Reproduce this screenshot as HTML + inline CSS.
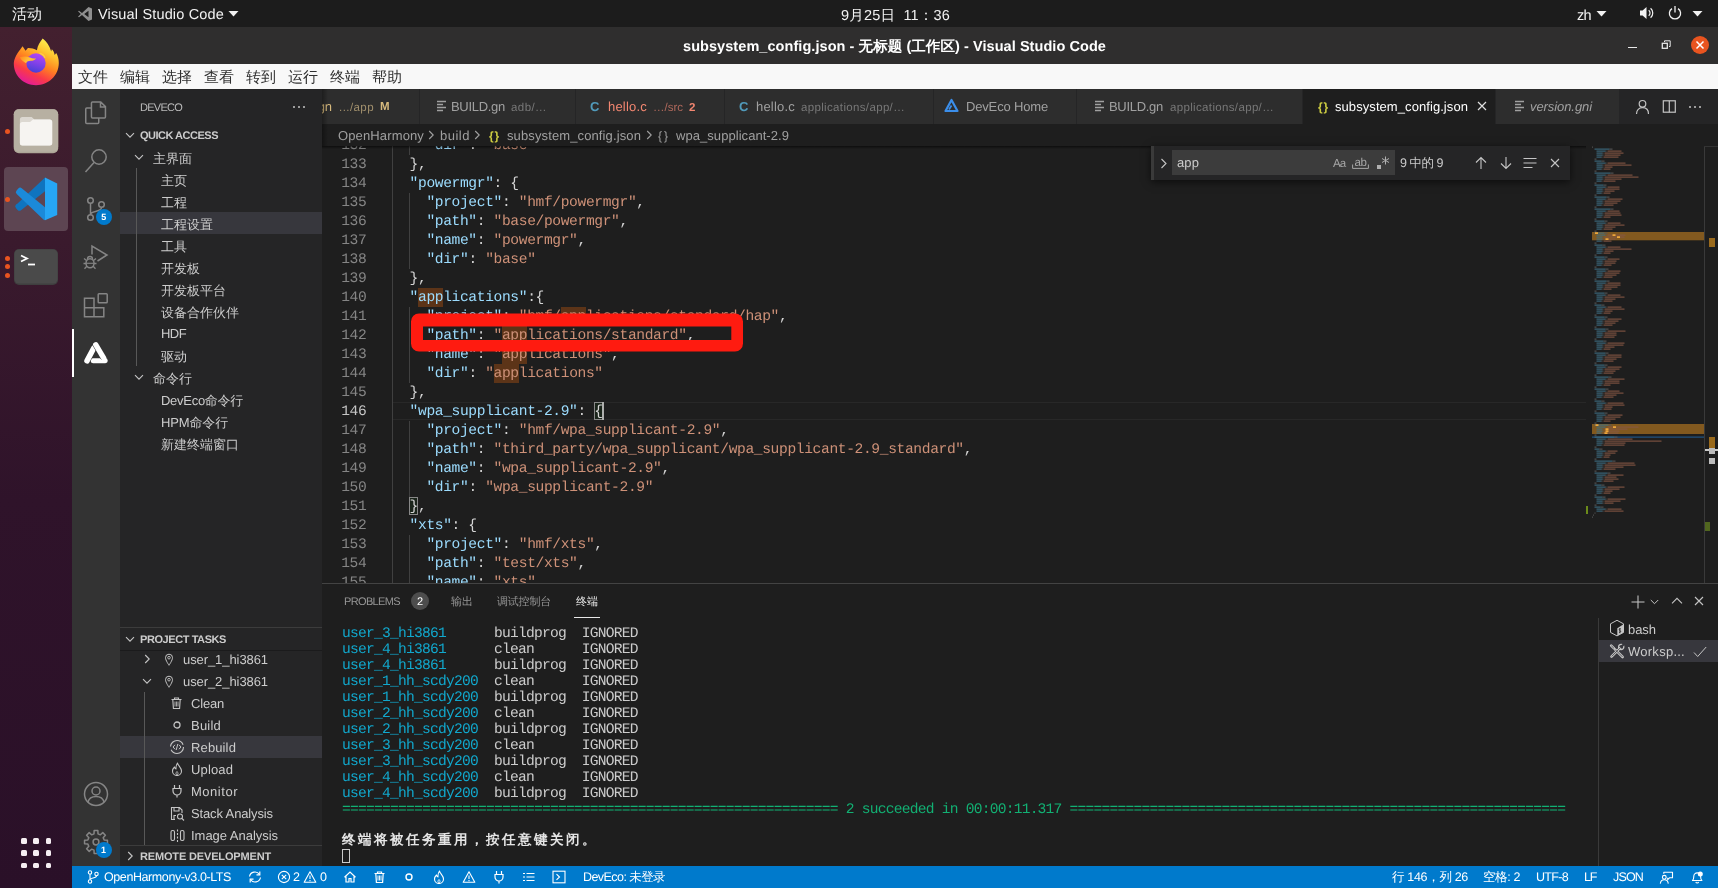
<!DOCTYPE html>
<html lang="zh"><head><meta charset="utf-8"><title>subsystem_config.json - Visual Studio Code</title>
<style>
html,body{margin:0;padding:0;}
body{width:1718px;height:888px;overflow:hidden;background:#1e1e1e;font-family:"Liberation Sans",sans-serif;position:relative;}
#root{position:absolute;left:0;top:0;width:1718px;height:888px;overflow:hidden;will-change:transform;}
#root div,#root span.t,#root svg{position:absolute;}
span.t{white-space:pre;display:block;text-rendering:geometricPrecision;}
span.m{font-family:"Liberation Mono",monospace;}
.code span{white-space:pre;}
</style></head>
<body><div id="root">
<div style="left:0px;top:0px;width:1718px;height:27px;background:#1c1c1c;"></div>
<div style="left:0px;top:27px;width:72px;height:861px;background:linear-gradient(180deg,#43202f 0%,#3a1a2d 25%,#2f132a 55%,#2a1028 100%);"></div>
<div style="left:72px;top:27px;width:1646px;height:37px;background:#2f2e2e;"></div>
<div style="left:72px;top:64px;width:1646px;height:25px;background:#f8f8f8;"></div>
<div style="left:72px;top:866px;width:1646px;height:22px;background:#007acc;"></div>
<span class="t" style="left:12px;top:5.4px;height:20px;line-height:20px;font-size:15px;color:#f2f2f2;letter-spacing:0.000px;">活动</span>
<svg style="left:77px;top:6px;" width="16" height="16" viewBox="0 0 16 16"><path d="M11.5 1 5 7 2 4.7 1 5.3 3.8 8 1 10.7l1 .6L5 9l6.5 6 3.5-1.6V2.6z M11.5 4.8v6.4L7.2 8z" fill="#8f8f8f" fill-rule="evenodd"/></svg>
<span class="t" style="left:98px;top:5.3px;height:20px;line-height:20px;font-size:14.5px;color:#f2f2f2;letter-spacing:0.162px;">Visual Studio Code</span>
<svg style="left:228px;top:10px;" width="11" height="8" viewBox="0 0 11 8"><path d="M0.5 1h10L5.5 6.5z" fill="#f2f2f2"/></svg>
<span class="t" style="left:841px;top:5.6px;height:20px;line-height:20px;font-size:14.5px;color:#f2f2f2;letter-spacing:0.172px;">9月25日  11：36</span>
<span class="t" style="left:1577px;top:5.6px;height:20px;line-height:20px;font-size:14.5px;color:#f2f2f2;letter-spacing:-0.664px;">zh</span>
<svg style="left:1596px;top:10px;" width="11" height="8" viewBox="0 0 11 8"><path d="M0.5 1h10L5.5 6.5z" fill="#f2f2f2"/></svg>
<svg style="left:1638px;top:5px;" width="18" height="16" viewBox="0 0 18 16"><path d="M2 5.5h2.6L8.5 2v12L4.6 10.5H2z" fill="#f2f2f2"/><path d="M10.7 5.2a3.6 3.6 0 0 1 0 5.6 M12.6 3.2a6.4 6.4 0 0 1 0 9.6" fill="none" stroke="#f2f2f2" stroke-width="1.2"/></svg>
<svg style="left:1666.5px;top:5px;" width="16" height="16" viewBox="0 0 16 16"><path d="M5 3.6a5.6 5.6 0 1 0 6 0" fill="none" stroke="#f2f2f2" stroke-width="1.3"/><path d="M8 1v6.5" stroke="#f2f2f2" stroke-width="1.3"/></svg>
<svg style="left:1692px;top:10px;" width="11" height="8" viewBox="0 0 11 8"><path d="M0.5 1h10L5.5 6.5z" fill="#f2f2f2"/></svg>
<svg style="left:12px;top:37px;" width="48" height="50" viewBox="0 0 48 50"><defs>
<linearGradient id="ffa" x1="0.8" y1="0.05" x2="0.32" y2="1"><stop offset="0" stop-color="#fff250"/><stop offset="0.25" stop-color="#ffc42f"/><stop offset="0.5" stop-color="#ff8420"/><stop offset="0.75" stop-color="#fa3a48"/><stop offset="1" stop-color="#e21a9c"/></linearGradient>
<linearGradient id="ffb" x1="0.65" y1="0" x2="0.35" y2="1"><stop offset="0" stop-color="#b546f6"/><stop offset="0.5" stop-color="#8241e8"/><stop offset="1" stop-color="#4540d6"/></linearGradient>
<linearGradient id="ffc" x1="0" y1="0.3" x2="1" y2="0.6"><stop offset="0" stop-color="#ff8f1f"/><stop offset="0.55" stop-color="#ffc23a"/><stop offset="1" stop-color="#ffae2e"/></linearGradient></defs>
<path d="M30.700 1.600C28.200 4.500 25.600 8.500 24.900 13.200 22 11.600 19 10.800 15.900 10.900L13.600 13.800 10.600 9.200C8.500 12.500 2.500 18.500 1.800 26 1.500 38.500 11.500 48.200 24 48.200S46.800 38.500 46.800 26C46.800 22 45.800 18.500 44.200 16L42.700 18C42.200 15.200 41.200 13.600 39.800 12.200L39.200 14.500C37.600 9 34.600 4.500 30.700 1.600z" fill="url(#ffa)"/>
<circle cx="24" cy="26" r="9.700" fill="url(#ffb)"/>
<path d="M7.800 20.300C11 19 15 19.200 18 20.500 20 21.300 22 21.600 24.200 21.200 22.800 23 21 23.800 19 23.800 16.500 23.800 14.800 24.600 14.100 26.200 11.500 25 9.200 23 7.800 20.300z" fill="url(#ffc)"/>
<path d="M27.500 16.200c2.600.6 4.600 2.300 5.400 4.600" fill="none" stroke="#ffcf4a" stroke-width="1.600" opacity="0.85"/></svg>
<svg style="left:13px;top:108px;" width="46" height="46" viewBox="0 0 46 46"><rect x="0.800" y="1.200" width="44.400" height="44" rx="5" fill="#aea798"/><rect x="0.800" y="1.200" width="44.400" height="42.500" rx="5" fill="#b7b0a2"/>
<path d="M6.900 11.500a2.500 2.500 0 0 1 2.500-2.500h9.300l2.600 2.600h15.400a2.500 2.500 0 0 1 2.500 2.500v20.800a2.500 2.500 0 0 1-2.500 2.500H9.400a2.500 2.500 0 0 1-2.500-2.500z" fill="#dcd8d1"/>
<path d="M6.900 16.500a2.500 2.500 0 0 1 2.500-2.500h7.600l3-2.400h16.700a2.500 2.500 0 0 1 2.500 2.500v20.800a2.500 2.500 0 0 1-2.500 2.500H9.400a2.500 2.500 0 0 1-2.500-2.500z" fill="#f6f4f1"/></svg>
<div style="left:4px;top:167px;width:64px;height:64px;background:#5d4552;border-radius:4px;"></div>
<svg style="left:0px;top:160px;" width="76" height="80" viewBox="0 0 76 80"><path d="M17.300 43.800 45 17.600v13.600L21 50.200a2.600 2.600 0 0 1-3.400-.2l-1.700-1.900a2.600 2.600 0 0 1 .1-3.500z" fill="#0f74bf"/>
<path d="M16.600 30.400l1.700-1.900a2.600 2.600 0 0 1 3.400-.3L45 47.300v12.900l-1.300-.5-27-25.700a2.600 2.600 0 0 1-.1-3.600z" fill="#1b8ad9"/>
<path d="M45 17.600l12.200 6v31.500L45 60.200z" fill="#26a6f5"/></svg>
<svg style="left:14px;top:249px;" width="44" height="36" viewBox="0 0 44 36"><rect x="0" y="0" width="44" height="36" rx="5" fill="#3f3f3f"/><rect x="0.500" y="0.500" width="43" height="34" rx="4.500" fill="#4a4a4a"/>
<path d="M7 6.500l6 3-6 3" fill="none" stroke="#fff" stroke-width="1.800"/><path d="M14 15.500h7" stroke="#fff" stroke-width="1.800"/></svg>
<div style="left:4.5px;top:128.5px;width:5px;height:5px;background:#e95420;border-radius:50%;"></div>
<div style="left:4.5px;top:197px;width:5px;height:5px;background:#e95420;border-radius:50%;"></div>
<div style="left:4.5px;top:255.5px;width:5px;height:5px;background:#e95420;border-radius:50%;"></div>
<div style="left:4.5px;top:264px;width:5px;height:5px;background:#e95420;border-radius:50%;"></div>
<div style="left:4.5px;top:272.5px;width:5px;height:5px;background:#e95420;border-radius:50%;"></div>
<div style="left:21px;top:838px;width:5.5px;height:5.5px;background:#f5eef2;border-radius:1.5px;"></div>
<div style="left:33.3px;top:838px;width:5.5px;height:5.5px;background:#f5eef2;border-radius:1.5px;"></div>
<div style="left:45.6px;top:838px;width:5.5px;height:5.5px;background:#f5eef2;border-radius:1.5px;"></div>
<div style="left:21px;top:850.3px;width:5.5px;height:5.5px;background:#f5eef2;border-radius:1.5px;"></div>
<div style="left:33.3px;top:850.3px;width:5.5px;height:5.5px;background:#f5eef2;border-radius:1.5px;"></div>
<div style="left:45.6px;top:850.3px;width:5.5px;height:5.5px;background:#f5eef2;border-radius:1.5px;"></div>
<div style="left:21px;top:862.6px;width:5.5px;height:5.5px;background:#f5eef2;border-radius:1.5px;"></div>
<div style="left:33.3px;top:862.6px;width:5.5px;height:5.5px;background:#f5eef2;border-radius:1.5px;"></div>
<div style="left:45.6px;top:862.6px;width:5.5px;height:5.5px;background:#f5eef2;border-radius:1.5px;"></div>
<span class="t" style="left:683px;top:37.2px;height:20px;line-height:20px;font-size:14.5px;color:#ffffff;font-weight:700;letter-spacing:0.065px;">subsystem_config.json - 无标题 (工作区) - Visual Studio Code</span>
<div style="left:1628px;top:46.6px;width:8.5px;height:1.1px;background:#e8e8e8;"></div>
<svg style="left:1661px;top:40px;" width="10" height="10" viewBox="0 0 10 10"><path d="M3.500 2v-1.200h5.700v5.700h-1.200" fill="none" stroke="#e8e8e8" stroke-width="1"/><rect x="1.300" y="3.300" width="5" height="5" fill="none" stroke="#e8e8e8" stroke-width="1.300"/></svg>
<div style="left:1691px;top:36px;width:18px;height:18px;background:#e9541f;border-radius:50%;"></div>
<svg style="left:1695px;top:40px;" width="10" height="10" viewBox="0 0 10 10"><path d="M1.500 1.500l7 7M8.500 1.500l-7 7" stroke="#fff" stroke-width="1.500"/></svg>
<span class="t" style="left:78px;top:68px;height:20px;line-height:20px;font-size:15px;color:#303030;letter-spacing:0.000px;">文件</span>
<span class="t" style="left:120px;top:68px;height:20px;line-height:20px;font-size:15px;color:#303030;letter-spacing:0.000px;">编辑</span>
<span class="t" style="left:162px;top:68px;height:20px;line-height:20px;font-size:15px;color:#303030;letter-spacing:0.000px;">选择</span>
<span class="t" style="left:204px;top:68px;height:20px;line-height:20px;font-size:15px;color:#303030;letter-spacing:0.000px;">查看</span>
<span class="t" style="left:246px;top:68px;height:20px;line-height:20px;font-size:15px;color:#303030;letter-spacing:0.000px;">转到</span>
<span class="t" style="left:288px;top:68px;height:20px;line-height:20px;font-size:15px;color:#303030;letter-spacing:0.000px;">运行</span>
<span class="t" style="left:330px;top:68px;height:20px;line-height:20px;font-size:15px;color:#303030;letter-spacing:0.000px;">终端</span>
<span class="t" style="left:372px;top:68px;height:20px;line-height:20px;font-size:15px;color:#303030;letter-spacing:0.000px;">帮助</span>
<svg style="left:86px;top:869px;" width="14" height="16" viewBox="0 0 14 16"><circle cx="4" cy="3.500" r="1.700" fill="none" stroke="#fff" stroke-width="1.100"/><circle cx="4" cy="12.500" r="1.700" fill="none" stroke="#fff" stroke-width="1.100"/><circle cx="10.500" cy="5" r="1.700" fill="none" stroke="#fff" stroke-width="1.100"/><path d="M4 5.200v5.600M10.500 6.700c0 3-6.500 1.500-6.500 4.100" fill="none" stroke="#fff" stroke-width="1.100"/></svg>
<span class="t" style="left:104px;top:867px;height:20px;line-height:20px;font-size:12.5px;color:#ffffff;letter-spacing:-0.412px;">OpenHarmony-v3.0-LTS</span>
<svg style="left:247px;top:870px;" width="16" height="14" viewBox="0 0 16 14"><path d="M2.500 6.500a5.500 5.500 0 0 1 10-2M13.500 7.500a5.500 5.500 0 0 1-10 2" fill="none" stroke="#fff" stroke-width="1.200"/><path d="M12.800 1.500v3.300h-3.300M3.200 12.500V9.200h3.300" fill="none" stroke="#fff" stroke-width="1.200"/></svg>
<svg style="left:277px;top:870px;" width="14" height="14" viewBox="0 0 14 14"><circle cx="7" cy="7" r="5.600" fill="none" stroke="#fff" stroke-width="1.100"/><path d="M4.800 4.800l4.400 4.400M9.200 4.800l-4.400 4.400" stroke="#fff" stroke-width="1.100"/></svg>
<span class="t" style="left:293px;top:867px;height:20px;line-height:20px;font-size:12.5px;color:#ffffff;letter-spacing:0.047px;">2</span>
<svg style="left:303px;top:870px;" width="14" height="14" viewBox="0 0 14 14"><path d="M7 1.800 12.800 12.200H1.200z" fill="none" stroke="#fff" stroke-width="1.100" stroke-linejoin="round"/><path d="M7 5.500v3.500M7 10v1.200" stroke="#fff" stroke-width="1.100"/></svg>
<span class="t" style="left:320px;top:867px;height:20px;line-height:20px;font-size:12.5px;color:#ffffff;letter-spacing:0.047px;">0</span>
<svg style="left:343px;top:870px;" width="14" height="14" viewBox="0 0 14 14"><path d="M1.500 7.200 7 2l5.500 5.200M3 6.500v5.500h3v-3.500h2v3.500h3V6.500" fill="none" stroke="#fff" stroke-width="1.200"/></svg>
<svg style="left:373px;top:870px;" width="13" height="14" viewBox="0 0 13 14"><path d="M1.500 3.500h10M4.500 3.500V2h4v1.500M2.800 3.500l.6 9h6.200l.6-9" fill="none" stroke="#fff" stroke-width="1.200"/><path d="M5 5.500v5M6.500 5.500v5M8 5.500v5" stroke="#fff" stroke-width="0.900"/></svg>
<svg style="left:404px;top:872px;" width="10" height="10" viewBox="0 0 10 10"><circle cx="5" cy="5" r="3" fill="none" stroke="#fff" stroke-width="1.400"/></svg>
<svg style="left:433px;top:870px;" width="12" height="14" viewBox="0 0 12 14"><path d="M6.500 1c.5 2.500 4 4.500 4 8a4.500 4.500 0 0 1-9 0c0-1.800 1-3 2-4 .2 1.200.8 1.800 1.500 2C4.800 5 5.500 2.500 6.500 1z" fill="none" stroke="#fff" stroke-width="1.100" stroke-linejoin="round"/><path d="M6 13c-1.200-.5-1.500-2 0-3.500 1.500 1.500 1.200 3 0 3.500z" fill="none" stroke="#fff" stroke-width="0.900"/></svg>
<svg style="left:462px;top:870px;" width="14" height="14" viewBox="0 0 14 14"><path d="M7 1.800 12.800 12.200H1.200z" fill="none" stroke="#fff" stroke-width="1.100" stroke-linejoin="round"/><path d="M7 5.500v3.500M7 10v1.200" stroke="#fff" stroke-width="1.100"/></svg>
<svg style="left:493px;top:870px;" width="12" height="14" viewBox="0 0 12 14"><path d="M3.500 1v3.500M8.500 1v3.500M2 4.500h8v2.500a4 4 0 0 1-8 0zM6 11v2.500" fill="none" stroke="#fff" stroke-width="1.200"/></svg>
<svg style="left:522px;top:870px;" width="14" height="14" viewBox="0 0 14 14"><path d="M4.500 3.500h8M4.500 7h8M4.500 10.500h8" stroke="#fff" stroke-width="1.200"/><path d="M1 3.500h2M1 7h2M1 10.500h2" stroke="#fff" stroke-width="1.200"/></svg>
<svg style="left:552px;top:870px;" width="14" height="14" viewBox="0 0 14 14"><rect x="1" y="1.200" width="12" height="11.600" fill="none" stroke="#fff" stroke-width="1.100"/><path d="M4.500 4.200 7.500 7l-3 2.800" fill="none" stroke="#fff" stroke-width="1.100"/></svg>
<span class="t" style="left:583px;top:867px;height:20px;line-height:20px;font-size:12.5px;color:#ffffff;letter-spacing:-0.565px;">DevEco: 未登录</span>
<span class="t" style="left:1392px;top:867px;height:20px;line-height:20px;font-size:12.5px;color:#ffffff;letter-spacing:-0.322px;">行 146，列 26</span>
<span class="t" style="left:1483px;top:867px;height:20px;line-height:20px;font-size:12.5px;color:#ffffff;letter-spacing:-0.381px;">空格: 2</span>
<span class="t" style="left:1536px;top:867px;height:20px;line-height:20px;font-size:12.5px;color:#ffffff;letter-spacing:-0.684px;">UTF-8</span>
<span class="t" style="left:1584px;top:867px;height:20px;line-height:20px;font-size:12.5px;color:#ffffff;letter-spacing:-1.297px;">LF</span>
<span class="t" style="left:1613px;top:867px;height:20px;line-height:20px;font-size:12.5px;color:#ffffff;letter-spacing:-0.836px;">JSON</span>
<svg style="left:1659px;top:870px;" width="16" height="14" viewBox="0 0 16 14"><circle cx="5.300" cy="7.300" r="1.900" fill="none" stroke="#fff" stroke-width="1.100"/><path d="M1.300 13.600c.3-2.700 1.900-3.900 4-3.900s3.700 1.200 4 3.900" fill="none" stroke="#fff" stroke-width="1.100"/><path d="M4.800 3.800V2.300h8.700v5.400h-2.800l-2 1.900V7.700" fill="none" stroke="#fff" stroke-width="1.100" stroke-linejoin="round"/></svg>
<svg style="left:1690px;top:870px;" width="14" height="14" viewBox="0 0 14 14"><path d="M2.500 10.500c1.200-1 1.300-2.200 1.300-4.200a3.400 3.400 0 0 1 6.800 0c0 2 .1 3.200 1.300 4.200z" fill="none" stroke="#fff" stroke-width="1.100" stroke-linejoin="round"/><path d="M5.800 12a1.500 1.500 0 0 0 2.800 0" fill="none" stroke="#fff" stroke-width="1.100"/><circle cx="10.300" cy="4" r="2.500" fill="#fff"/></svg>
<div style="left:72px;top:89px;width:48px;height:777px;background:#333333;"></div>
<div style="left:120px;top:89px;width:202px;height:777px;background:#252526;"></div>
<svg style="left:84px;top:100px;" width="24" height="26" viewBox="0 0 24 26"><path d="M8.450 1.950h8.300l4.700 4.700v10.400a1 1 0 0 1-1 1h-12a1 1 0 0 1-1-1v-14.100a1 1 0 0 1 1-1zM16.500 2.200v4.700h4.700M7.400 8.050H2.750a1 1 0 0 0-1 1v13.400a1 1 0 0 0 1 1h11a1 1 0 0 0 1-1V18.100" fill="none" stroke="#858585" stroke-width="1.500"/></svg>
<svg style="left:84px;top:148px;" width="24" height="26" viewBox="0 0 24 26"><circle cx="15" cy="9" r="7.200" fill="none" stroke="#858585" stroke-width="1.500"/><path d="M10 14.500 1.500 24" stroke="#858585" stroke-width="1.500"/></svg>
<svg style="left:84px;top:196px;" width="24" height="26" viewBox="0 0 24 26"><circle cx="6.500" cy="4.500" r="2.800" fill="none" stroke="#858585" stroke-width="1.500"/><circle cx="6.500" cy="21.500" r="2.800" fill="none" stroke="#858585" stroke-width="1.500"/><circle cx="17.500" cy="8.500" r="2.800" fill="none" stroke="#858585" stroke-width="1.500"/><path d="M6.500 7.500v11M17.500 11.500c0 5-11 3-11 7" fill="none" stroke="#858585" stroke-width="1.500"/></svg>
<div style="left:96px;top:209px;width:16px;height:16px;background:#007acc;border-radius:50%;"></div>
<span class="t" style="left:101.3px;top:209.3px;height:16px;line-height:16px;font-size:9px;color:#ffffff;font-weight:700;">5</span>
<svg style="left:83px;top:244px;" width="26" height="26" viewBox="0 0 26 26"><path d="M9 10.500V2l15 9-9.500 6" fill="none" stroke="#858585" stroke-width="1.500" stroke-linejoin="miter"/><ellipse cx="7" cy="19.300" rx="4" ry="4.500" fill="none" stroke="#858585" stroke-width="1.500"/><path d="M3.300 19.300h7.400" stroke="#858585" stroke-width="1.100"/><path d="M3.500 16.500 1 14.500M10.500 16.500 13 14.500M3.200 19.500H0.500M10.800 19.500h2.700M3.800 22.300 1.500 24.800M10.200 22.300l2.300 2.500M4.500 15a2.500 2.500 0 0 1 5 0" fill="none" stroke="#858585" stroke-width="1.300"/></svg>
<svg style="left:83px;top:292px;" width="26" height="26" viewBox="0 0 26 26"><path d="M1.500 6.300h9.500v9.500h9.800v9H1.500zM1.500 15.800h9.500v9" fill="none" stroke="#858585" stroke-width="1.500"/><rect x="15.200" y="1.800" width="9" height="9" rx="0.800" fill="none" stroke="#858585" stroke-width="1.500"/></svg>
<div style="left:72px;top:329px;width:2px;height:48px;background:#ffffff;"></div>
<svg style="left:83px;top:340px;" width="26" height="25" viewBox="0 0 26 25"><g fill="none" stroke-linecap="round"><path d="M10 20.700H22.300" stroke="#fff" stroke-width="4.900"/><path d="M10.800 8 4 20.900" stroke="#333" stroke-width="6.400"/><path d="M10.800 8 4 20.900" stroke="#fff" stroke-width="5.500"/><path d="M12.700 4.700 19.800 16.800" stroke="#333" stroke-width="6.200"/><path d="M12.700 4.700 20.700 18.200" stroke="#fff" stroke-width="5.300"/></g></svg>
<svg style="left:83px;top:781px;" width="26" height="26" viewBox="0 0 26 26"><circle cx="13" cy="13" r="11.500" fill="none" stroke="#858585" stroke-width="1.500"/><circle cx="13" cy="10" r="4" fill="none" stroke="#858585" stroke-width="1.500"/><path d="M5 21c1-4 4.500-5.500 8-5.500s7 1.500 8 5.500" fill="none" stroke="#858585" stroke-width="1.500"/></svg>
<svg style="left:83px;top:829px;" width="26" height="26" viewBox="0 0 26 26"><path d="M11.00 4.84L11.15 1.55L14.85 1.55L15.00 4.84L17.36 5.82L19.79 3.60L22.40 6.21L20.18 8.64L21.16 11.00L24.45 11.15L24.45 14.85L21.16 15.00L20.18 17.36L22.40 19.79L19.79 22.40L17.36 20.18L15.00 21.16L14.85 24.45L11.15 24.45L11.00 21.16L8.64 20.18L6.21 22.40L3.60 19.79L5.82 17.36L4.84 15.00L1.55 14.85L1.55 11.15L4.84 11.00L5.82 8.64L3.60 6.21L6.21 3.60L8.64 5.82z" fill="none" stroke="#858585" stroke-width="1.500" stroke-linejoin="round"/><circle cx="13" cy="13" r="2.900" fill="none" stroke="#858585" stroke-width="1.500"/></svg>
<div style="left:96px;top:842px;width:16px;height:16px;background:#007acc;border-radius:50%;"></div>
<span class="t" style="left:101px;top:842px;height:16px;line-height:16px;font-size:9px;color:#ffffff;font-weight:700;">1</span>
<span class="t" style="left:140px;top:97.5px;height:20px;line-height:20px;font-size:11px;color:#bbbbbb;letter-spacing:-0.745px;">DEVECO</span>
<div style="left:292.5px;top:105.7px;width:2px;height:2px;background:#c5c5c5;border-radius:50%;"></div>
<div style="left:297.5px;top:105.7px;width:2px;height:2px;background:#c5c5c5;border-radius:50%;"></div>
<div style="left:302.5px;top:105.7px;width:2px;height:2px;background:#c5c5c5;border-radius:50%;"></div>
<svg style="left:125px;top:131.5px;" width="10" height="7" viewBox="0 0 10 7"><path d="M1 1.200l4 4 4-4" fill="none" stroke="#c5c5c5" stroke-width="1.100"/></svg>
<span class="t" style="left:140px;top:126px;height:20px;line-height:20px;font-size:11px;color:#cccccc;font-weight:700;letter-spacing:-0.495px;">QUICK ACCESS</span>
<div style="left:120px;top:212px;width:202px;height:22px;background:#37373d;"></div>
<div style="left:136px;top:168px;width:1px;height:198px;background:#585858;"></div>
<svg style="left:134px;top:153.5px;" width="10" height="7" viewBox="0 0 10 7"><path d="M1 1.200l4 4 4-4" fill="none" stroke="#c5c5c5" stroke-width="1.100"/></svg>
<span class="t" style="left:153px;top:147.9px;height:22px;line-height:22px;font-size:13px;color:#cccccc;letter-spacing:0.000px;">主界面</span>
<span class="t" style="left:161px;top:169.9px;height:22px;line-height:22px;font-size:13px;color:#cccccc;letter-spacing:0.000px;">主页</span>
<span class="t" style="left:161px;top:191.9px;height:22px;line-height:22px;font-size:13px;color:#cccccc;letter-spacing:0.000px;">工程</span>
<span class="t" style="left:161px;top:213.9px;height:22px;line-height:22px;font-size:13px;color:#cccccc;letter-spacing:0.000px;">工程设置</span>
<span class="t" style="left:161px;top:235.9px;height:22px;line-height:22px;font-size:13px;color:#cccccc;letter-spacing:0.000px;">工具</span>
<span class="t" style="left:161px;top:257.9px;height:22px;line-height:22px;font-size:13px;color:#cccccc;letter-spacing:0.000px;">开发板</span>
<span class="t" style="left:161px;top:279.9px;height:22px;line-height:22px;font-size:13px;color:#cccccc;letter-spacing:0.000px;">开发板平台</span>
<span class="t" style="left:161px;top:301.9px;height:22px;line-height:22px;font-size:13px;color:#cccccc;letter-spacing:0.000px;">设备合作伙伴</span>
<span class="t" style="left:161px;top:322.9px;height:22px;line-height:22px;font-size:13px;color:#cccccc;letter-spacing:-0.573px;">HDF</span>
<span class="t" style="left:161px;top:345.9px;height:22px;line-height:22px;font-size:13px;color:#cccccc;letter-spacing:0.000px;">驱动</span>
<svg style="left:134px;top:373.5px;" width="10" height="7" viewBox="0 0 10 7"><path d="M1 1.200l4 4 4-4" fill="none" stroke="#c5c5c5" stroke-width="1.100"/></svg>
<span class="t" style="left:153px;top:367.9px;height:22px;line-height:22px;font-size:13px;color:#cccccc;letter-spacing:0.000px;">命令行</span>
<span class="t" style="left:161px;top:389.9px;height:22px;line-height:22px;font-size:13px;color:#cccccc;letter-spacing:-0.281px;">DevEco命令行</span>
<span class="t" style="left:161px;top:411.9px;height:22px;line-height:22px;font-size:13px;color:#cccccc;letter-spacing:-0.148px;">HPM命令行</span>
<span class="t" style="left:161px;top:433.9px;height:22px;line-height:22px;font-size:13px;color:#cccccc;letter-spacing:0.000px;">新建终端窗口</span>
<div style="left:120px;top:627px;width:202px;height:1px;background:#3c3c3c;"></div>
<svg style="left:125px;top:635.5px;" width="10" height="7" viewBox="0 0 10 7"><path d="M1 1.200l4 4 4-4" fill="none" stroke="#c5c5c5" stroke-width="1.100"/></svg>
<span class="t" style="left:140px;top:630px;height:20px;line-height:20px;font-size:11px;color:#cccccc;font-weight:700;letter-spacing:-0.422px;">PROJECT TASKS</span>
<div style="left:120px;top:650px;width:202px;height:1px;background:#1b1b1c;"></div>
<div style="left:120px;top:736px;width:202px;height:22px;background:#37373d;"></div>
<div style="left:144px;top:692px;width:1px;height:154px;background:#585858;"></div>
<svg style="left:143.5px;top:654px;" width="7" height="10" viewBox="0 0 7 10"><path d="M1.200 1l4 4-4 4" fill="none" stroke="#c5c5c5" stroke-width="1.100"/></svg>
<svg style="left:164px;top:652.5px;" width="10" height="14" viewBox="0 0 10 14"><path d="M5 1.200a3.500 3.500 0 0 1 3.500 3.500c0 2.500-3.500 7.600-3.500 7.600S1.500 7.200 1.500 4.700A3.500 3.500 0 0 1 5 1.200z" fill="none" stroke="#c5c5c5" stroke-width="1"/><circle cx="5" cy="4.700" r="1.300" fill="none" stroke="#c5c5c5" stroke-width="0.900"/></svg>
<span class="t" style="left:183px;top:648.7px;height:22px;line-height:22px;font-size:13px;color:#cccccc;letter-spacing:-0.079px;">user_1_hi3861</span>
<svg style="left:142px;top:677.5px;" width="10" height="7" viewBox="0 0 10 7"><path d="M1 1.200l4 4 4-4" fill="none" stroke="#c5c5c5" stroke-width="1.100"/></svg>
<svg style="left:164px;top:674.5px;" width="10" height="14" viewBox="0 0 10 14"><path d="M5 1.200a3.500 3.500 0 0 1 3.500 3.500c0 2.500-3.500 7.600-3.500 7.600S1.500 7.200 1.500 4.700A3.500 3.500 0 0 1 5 1.200z" fill="none" stroke="#c5c5c5" stroke-width="1"/><circle cx="5" cy="4.700" r="1.300" fill="none" stroke="#c5c5c5" stroke-width="0.900"/></svg>
<span class="t" style="left:183px;top:670.7px;height:22px;line-height:22px;font-size:13px;color:#cccccc;letter-spacing:-0.079px;">user_2_hi3861</span>
<span class="t" style="left:191px;top:692.7px;height:22px;line-height:22px;font-size:13px;color:#cccccc;letter-spacing:-0.194px;">Clean</span>
<span class="t" style="left:191px;top:714.7px;height:22px;line-height:22px;font-size:13px;color:#cccccc;letter-spacing:0.216px;">Build</span>
<span class="t" style="left:191px;top:736.7px;height:22px;line-height:22px;font-size:13px;color:#cccccc;letter-spacing:0.129px;">Rebuild</span>
<span class="t" style="left:191px;top:758.7px;height:22px;line-height:22px;font-size:13px;color:#cccccc;letter-spacing:0.133px;">Upload</span>
<span class="t" style="left:191px;top:780.7px;height:22px;line-height:22px;font-size:13px;color:#cccccc;letter-spacing:0.520px;">Monitor</span>
<span class="t" style="left:191px;top:802.7px;height:22px;line-height:22px;font-size:13px;color:#cccccc;letter-spacing:-0.131px;">Stack Analysis</span>
<span class="t" style="left:191px;top:824.7px;height:22px;line-height:22px;font-size:13px;color:#cccccc;letter-spacing:-0.031px;">Image Analysis</span>
<svg style="left:170px;top:696px;" width="13" height="14" viewBox="0 0 13 14"><path d="M1.500 3.500h10M4.500 3.500V2h4v1.500M2.800 3.500l.6 9h6.200l.6-9" fill="none" stroke="#c5c5c5" stroke-width="1.100"/><path d="M5 5.500v5M6.500 5.500v5M8 5.500v5" stroke="#c5c5c5" stroke-width="0.800"/></svg>
<svg style="left:172px;top:720px;" width="10" height="10" viewBox="0 0 10 10"><circle cx="5" cy="5" r="3" fill="none" stroke="#c5c5c5" stroke-width="1.300"/></svg>
<svg style="left:169px;top:739px;" width="16" height="16" viewBox="0 0 16 16"><circle cx="8" cy="8" r="6.500" fill="none" stroke="#c5c5c5" stroke-width="1.100" stroke-dasharray="17 3.400"/><path d="M6 5.800 4 8l2 2.200M10 5.800 12 8l-2 2.200M8.800 5l-1.600 6" fill="none" stroke="#c5c5c5" stroke-width="1"/></svg>
<svg style="left:171px;top:762px;" width="12" height="14" viewBox="0 0 12 14"><path d="M6.500 1c.5 2.500 4 4.500 4 8a4.500 4.500 0 0 1-9 0c0-1.800 1-3 2-4 .2 1.200.8 1.800 1.500 2C4.800 5 5.500 2.500 6.500 1z" fill="none" stroke="#c5c5c5" stroke-width="1.100" stroke-linejoin="round"/><path d="M6 13c-1.200-.5-1.500-2 0-3.500 1.500 1.500 1.200 3 0 3.500z" fill="none" stroke="#c5c5c5" stroke-width="0.900"/></svg>
<svg style="left:171px;top:784px;" width="12" height="14" viewBox="0 0 12 14"><path d="M3.500 1v3.500M8.500 1v3.500M2 4.500h8v2.500a4 4 0 0 1-8 0zM6 11v2.500" fill="none" stroke="#c5c5c5" stroke-width="1.200"/></svg>
<svg style="left:170px;top:806px;" width="15" height="15" viewBox="0 0 15 15"><path d="M5 13.500H1.500v-12h8l2.500 2.500v3M4 1.500v3.500h5v-3.500M4 13.500v-4h2" fill="none" stroke="#c5c5c5" stroke-width="1.100"/><circle cx="10" cy="10.500" r="2.500" fill="none" stroke="#c5c5c5" stroke-width="1.100"/><path d="M12 12.500l2 2" stroke="#c5c5c5" stroke-width="1.100"/></svg>
<svg style="left:170px;top:829px;" width="15" height="13" viewBox="0 0 15 13"><rect x="1" y="1.500" width="3.500" height="10" rx="1.500" fill="none" stroke="#c5c5c5" stroke-width="1.100"/><rect x="10.500" y="1.500" width="3.500" height="10" rx="1.500" fill="none" stroke="#c5c5c5" stroke-width="1.100"/><path d="M7.500 0.500v2M7.500 4v2M7.500 7.500v2M7.500 11v2" stroke="#c5c5c5" stroke-width="1.100"/></svg>
<div style="left:120px;top:845px;width:202px;height:1px;background:#3c3c3c;"></div>
<svg style="left:126.5px;top:851px;" width="7" height="10" viewBox="0 0 7 10"><path d="M1.200 1l4 4-4 4" fill="none" stroke="#c5c5c5" stroke-width="1.100"/></svg>
<span class="t" style="left:140px;top:847px;height:20px;line-height:20px;font-size:11px;color:#cccccc;font-weight:700;letter-spacing:-0.158px;">REMOTE DEVELOPMENT</span>
<div style="left:322px;top:89px;width:1396px;height:35px;background:#252526;"></div>
<div style="left:322px;top:124px;width:1396px;height:22px;background:#1e1e1e;"></div>
<div style="left:322px;top:146px;width:1396px;height:437px;background:#1e1e1e;"></div>
<div style="left:393px;top:401.5px;width:1193px;height:1.5px;background:#282828;"></div>
<div style="left:393px;top:418.5px;width:1193px;height:1.5px;background:#282828;"></div>
<div style="left:418px;top:287.5px;width:25.2px;height:19px;background:#5c3418;"></div>
<div style="left:560.8px;top:306.5px;width:25.2px;height:19px;background:#5c3418;"></div>
<div style="left:502px;top:325.5px;width:25.2px;height:19px;background:#5c3418;"></div>
<div style="left:502px;top:344.5px;width:25.2px;height:19px;background:#5c3418;"></div>
<div style="left:493.6px;top:363.5px;width:25.2px;height:19px;background:#5c3418;"></div>
<div style="left:392px;top:146px;width:1px;height:437px;background:#404040;"></div>
<div style="left:409px;top:135.5px;width:1px;height:19px;background:#404040;"></div>
<div style="left:409px;top:192.5px;width:1px;height:76px;background:#404040;"></div>
<div style="left:409px;top:306.5px;width:1px;height:76px;background:#404040;"></div>
<div style="left:409px;top:420.5px;width:1px;height:76px;background:#404040;"></div>
<div style="left:409px;top:534.5px;width:1px;height:57px;background:#404040;"></div>
<div style="left:593.9px;top:402px;width:9.4px;height:18px;background:rgba(0,100,0,0.1);border:1px solid #888;box-sizing:border-box;"></div>
<div style="left:409.1px;top:497px;width:9.4px;height:18px;background:rgba(0,100,0,0.1);border:1px solid #888;box-sizing:border-box;"></div>
<span class="t m" style="right:1351.6px;top:136.5px;height:19px;line-height:19px;font-size:14.6px;color:#858585;letter-spacing:-0.362px;">132</span>
<span class="t m" style="left:426.4px;top:136.5px;height:19px;line-height:19px;font-size:14.6px;color:#d4d4d4;letter-spacing:-0.362px;"><span style="color:#9cdcfe">&quot;dir&quot;</span><span style="color:#d4d4d4">: </span><span style="color:#ce9178">&quot;base&quot;</span></span>
<span class="t m" style="right:1351.6px;top:155.5px;height:19px;line-height:19px;font-size:14.6px;color:#858585;letter-spacing:-0.362px;">133</span>
<span class="t m" style="left:409.6px;top:155.5px;height:19px;line-height:19px;font-size:14.6px;color:#d4d4d4;letter-spacing:-0.362px;"><span style="color:#d4d4d4">},</span></span>
<span class="t m" style="right:1351.6px;top:174.5px;height:19px;line-height:19px;font-size:14.6px;color:#858585;letter-spacing:-0.362px;">134</span>
<span class="t m" style="left:409.6px;top:174.5px;height:19px;line-height:19px;font-size:14.6px;color:#d4d4d4;letter-spacing:-0.362px;"><span style="color:#9cdcfe">&quot;powermgr&quot;</span><span style="color:#d4d4d4">: {</span></span>
<span class="t m" style="right:1351.6px;top:193.5px;height:19px;line-height:19px;font-size:14.6px;color:#858585;letter-spacing:-0.362px;">135</span>
<span class="t m" style="left:426.4px;top:193.5px;height:19px;line-height:19px;font-size:14.6px;color:#d4d4d4;letter-spacing:-0.362px;"><span style="color:#9cdcfe">&quot;project&quot;</span><span style="color:#d4d4d4">: </span><span style="color:#ce9178">&quot;hmf/powermgr&quot;</span><span style="color:#d4d4d4">,</span></span>
<span class="t m" style="right:1351.6px;top:212.5px;height:19px;line-height:19px;font-size:14.6px;color:#858585;letter-spacing:-0.362px;">136</span>
<span class="t m" style="left:426.4px;top:212.5px;height:19px;line-height:19px;font-size:14.6px;color:#d4d4d4;letter-spacing:-0.362px;"><span style="color:#9cdcfe">&quot;path&quot;</span><span style="color:#d4d4d4">: </span><span style="color:#ce9178">&quot;base/powermgr&quot;</span><span style="color:#d4d4d4">,</span></span>
<span class="t m" style="right:1351.6px;top:231.5px;height:19px;line-height:19px;font-size:14.6px;color:#858585;letter-spacing:-0.362px;">137</span>
<span class="t m" style="left:426.4px;top:231.5px;height:19px;line-height:19px;font-size:14.6px;color:#d4d4d4;letter-spacing:-0.362px;"><span style="color:#9cdcfe">&quot;name&quot;</span><span style="color:#d4d4d4">: </span><span style="color:#ce9178">&quot;powermgr&quot;</span><span style="color:#d4d4d4">,</span></span>
<span class="t m" style="right:1351.6px;top:250.5px;height:19px;line-height:19px;font-size:14.6px;color:#858585;letter-spacing:-0.362px;">138</span>
<span class="t m" style="left:426.4px;top:250.5px;height:19px;line-height:19px;font-size:14.6px;color:#d4d4d4;letter-spacing:-0.362px;"><span style="color:#9cdcfe">&quot;dir&quot;</span><span style="color:#d4d4d4">: </span><span style="color:#ce9178">&quot;base&quot;</span></span>
<span class="t m" style="right:1351.6px;top:269.5px;height:19px;line-height:19px;font-size:14.6px;color:#858585;letter-spacing:-0.362px;">139</span>
<span class="t m" style="left:409.6px;top:269.5px;height:19px;line-height:19px;font-size:14.6px;color:#d4d4d4;letter-spacing:-0.362px;"><span style="color:#d4d4d4">},</span></span>
<span class="t m" style="right:1351.6px;top:288.5px;height:19px;line-height:19px;font-size:14.6px;color:#858585;letter-spacing:-0.362px;">140</span>
<span class="t m" style="left:409.6px;top:288.5px;height:19px;line-height:19px;font-size:14.6px;color:#d4d4d4;letter-spacing:-0.362px;"><span style="color:#9cdcfe">&quot;applications&quot;</span><span style="color:#d4d4d4">:{</span></span>
<span class="t m" style="right:1351.6px;top:307.5px;height:19px;line-height:19px;font-size:14.6px;color:#858585;letter-spacing:-0.362px;">141</span>
<span class="t m" style="left:426.4px;top:307.5px;height:19px;line-height:19px;font-size:14.6px;color:#d4d4d4;letter-spacing:-0.362px;"><span style="color:#9cdcfe">&quot;project&quot;</span><span style="color:#d4d4d4">: </span><span style="color:#ce9178">&quot;hmf/applications/standard/hap&quot;</span><span style="color:#d4d4d4">,</span></span>
<span class="t m" style="right:1351.6px;top:326.5px;height:19px;line-height:19px;font-size:14.6px;color:#858585;letter-spacing:-0.362px;">142</span>
<span class="t m" style="left:426.4px;top:326.5px;height:19px;line-height:19px;font-size:14.6px;color:#d4d4d4;letter-spacing:-0.362px;"><span style="color:#9cdcfe">&quot;path&quot;</span><span style="color:#d4d4d4">: </span><span style="color:#ce9178">&quot;applications/standard&quot;</span><span style="color:#d4d4d4">,</span></span>
<span class="t m" style="right:1351.6px;top:345.5px;height:19px;line-height:19px;font-size:14.6px;color:#858585;letter-spacing:-0.362px;">143</span>
<span class="t m" style="left:426.4px;top:345.5px;height:19px;line-height:19px;font-size:14.6px;color:#d4d4d4;letter-spacing:-0.362px;"><span style="color:#9cdcfe">&quot;name&quot;</span><span style="color:#d4d4d4">: </span><span style="color:#ce9178">&quot;applications&quot;</span><span style="color:#d4d4d4">,</span></span>
<span class="t m" style="right:1351.6px;top:364.5px;height:19px;line-height:19px;font-size:14.6px;color:#858585;letter-spacing:-0.362px;">144</span>
<span class="t m" style="left:426.4px;top:364.5px;height:19px;line-height:19px;font-size:14.6px;color:#d4d4d4;letter-spacing:-0.362px;"><span style="color:#9cdcfe">&quot;dir&quot;</span><span style="color:#d4d4d4">: </span><span style="color:#ce9178">&quot;applications&quot;</span></span>
<span class="t m" style="right:1351.6px;top:383.5px;height:19px;line-height:19px;font-size:14.6px;color:#858585;letter-spacing:-0.362px;">145</span>
<span class="t m" style="left:409.6px;top:383.5px;height:19px;line-height:19px;font-size:14.6px;color:#d4d4d4;letter-spacing:-0.362px;"><span style="color:#d4d4d4">},</span></span>
<span class="t m" style="right:1351.6px;top:402.5px;height:19px;line-height:19px;font-size:14.6px;color:#c6c6c6;letter-spacing:-0.362px;">146</span>
<span class="t m" style="left:409.6px;top:402.5px;height:19px;line-height:19px;font-size:14.6px;color:#d4d4d4;letter-spacing:-0.362px;"><span style="color:#9cdcfe">&quot;wpa_supplicant-2.9&quot;</span><span style="color:#d4d4d4">: {</span></span>
<span class="t m" style="right:1351.6px;top:421.5px;height:19px;line-height:19px;font-size:14.6px;color:#858585;letter-spacing:-0.362px;">147</span>
<span class="t m" style="left:426.4px;top:421.5px;height:19px;line-height:19px;font-size:14.6px;color:#d4d4d4;letter-spacing:-0.362px;"><span style="color:#9cdcfe">&quot;project&quot;</span><span style="color:#d4d4d4">: </span><span style="color:#ce9178">&quot;hmf/wpa_supplicant-2.9&quot;</span><span style="color:#d4d4d4">,</span></span>
<span class="t m" style="right:1351.6px;top:440.5px;height:19px;line-height:19px;font-size:14.6px;color:#858585;letter-spacing:-0.362px;">148</span>
<span class="t m" style="left:426.4px;top:440.5px;height:19px;line-height:19px;font-size:14.6px;color:#d4d4d4;letter-spacing:-0.362px;"><span style="color:#9cdcfe">&quot;path&quot;</span><span style="color:#d4d4d4">: </span><span style="color:#ce9178">&quot;third_party/wpa_supplicant/wpa_supplicant-2.9_standard&quot;</span><span style="color:#d4d4d4">,</span></span>
<span class="t m" style="right:1351.6px;top:459.5px;height:19px;line-height:19px;font-size:14.6px;color:#858585;letter-spacing:-0.362px;">149</span>
<span class="t m" style="left:426.4px;top:459.5px;height:19px;line-height:19px;font-size:14.6px;color:#d4d4d4;letter-spacing:-0.362px;"><span style="color:#9cdcfe">&quot;name&quot;</span><span style="color:#d4d4d4">: </span><span style="color:#ce9178">&quot;wpa_supplicant-2.9&quot;</span><span style="color:#d4d4d4">,</span></span>
<span class="t m" style="right:1351.6px;top:478.5px;height:19px;line-height:19px;font-size:14.6px;color:#858585;letter-spacing:-0.362px;">150</span>
<span class="t m" style="left:426.4px;top:478.5px;height:19px;line-height:19px;font-size:14.6px;color:#d4d4d4;letter-spacing:-0.362px;"><span style="color:#9cdcfe">&quot;dir&quot;</span><span style="color:#d4d4d4">: </span><span style="color:#ce9178">&quot;wpa_supplicant-2.9&quot;</span></span>
<span class="t m" style="right:1351.6px;top:497.5px;height:19px;line-height:19px;font-size:14.6px;color:#858585;letter-spacing:-0.362px;">151</span>
<span class="t m" style="left:409.6px;top:497.5px;height:19px;line-height:19px;font-size:14.6px;color:#d4d4d4;letter-spacing:-0.362px;"><span style="color:#d4d4d4">},</span></span>
<span class="t m" style="right:1351.6px;top:516.5px;height:19px;line-height:19px;font-size:14.6px;color:#858585;letter-spacing:-0.362px;">152</span>
<span class="t m" style="left:409.6px;top:516.5px;height:19px;line-height:19px;font-size:14.6px;color:#d4d4d4;letter-spacing:-0.362px;"><span style="color:#9cdcfe">&quot;xts&quot;</span><span style="color:#d4d4d4">: {</span></span>
<span class="t m" style="right:1351.6px;top:535.5px;height:19px;line-height:19px;font-size:14.6px;color:#858585;letter-spacing:-0.362px;">153</span>
<span class="t m" style="left:426.4px;top:535.5px;height:19px;line-height:19px;font-size:14.6px;color:#d4d4d4;letter-spacing:-0.362px;"><span style="color:#9cdcfe">&quot;project&quot;</span><span style="color:#d4d4d4">: </span><span style="color:#ce9178">&quot;hmf/xts&quot;</span><span style="color:#d4d4d4">,</span></span>
<span class="t m" style="right:1351.6px;top:554.5px;height:19px;line-height:19px;font-size:14.6px;color:#858585;letter-spacing:-0.362px;">154</span>
<span class="t m" style="left:426.4px;top:554.5px;height:19px;line-height:19px;font-size:14.6px;color:#d4d4d4;letter-spacing:-0.362px;"><span style="color:#9cdcfe">&quot;path&quot;</span><span style="color:#d4d4d4">: </span><span style="color:#ce9178">&quot;test/xts&quot;</span><span style="color:#d4d4d4">,</span></span>
<span class="t m" style="right:1351.6px;top:573.5px;height:19px;line-height:19px;font-size:14.6px;color:#858585;letter-spacing:-0.362px;">155</span>
<span class="t m" style="left:426.4px;top:573.5px;height:19px;line-height:19px;font-size:14.6px;color:#d4d4d4;letter-spacing:-0.362px;"><span style="color:#9cdcfe">&quot;name&quot;</span><span style="color:#d4d4d4">: </span><span style="color:#ce9178">&quot;xts&quot;</span><span style="color:#d4d4d4">,</span></span>
<div style="left:602.3px;top:402px;width:2px;height:18px;background:#aeafad;"></div>
<div style="left:322px;top:124px;width:1396px;height:22px;background:#1e1e1e;"></div>
<div style="left:322px;top:146px;width:1264px;height:3px;background:linear-gradient(180deg,rgba(0,0,0,0.55),rgba(0,0,0,0));"></div>
<svg style="left:405px;top:308px;" width="344" height="50" viewBox="0 0 344 50"><path d="M14 5.400h316a8 8 0 0 1 8 8v22.200a8 8 0 0 1-8 8H14a8 8 0 0 1-8-8V13.400a8 8 0 0 1 8-8zM18 18.400v13.700h308.300V18.400z" fill="#ff1b10" fill-rule="evenodd"/></svg>
<svg style="left:1592px;top:146px;" width="112" height="374" viewBox="0 0 112 374"><rect x="0" y="86" width="112" height="8.300" fill="#82591f"/><rect x="0" y="278" width="112" height="10" fill="#82591f"/><rect x="0" y="290.300" width="112" height="1.700" fill="#1f4466"/><path d="M2.5 3.1h15M4.5 5.1h9M4.5 7.1h6M4.5 9.1h6M4.5 11.1h5M2.5 15.1h7M4.5 17.1h9M4.5 19.1h6M4.5 21.1h6M4.5 23.1h5M2.5 27.1h16M4.5 29.1h9M4.5 31.1h6M4.5 33.1h6M4.5 35.1h5M2.5 39.1h9M4.5 41.1h9M4.5 43.1h6M4.5 45.1h6M4.5 47.1h5M2.5 51.1h12M4.5 53.1h9M4.5 55.1h6M4.5 57.1h6M4.5 59.1h5M2.5 63.1h16M4.5 65.1h9M4.5 67.1h6M4.5 69.1h6M4.5 71.1h5M2.5 75.1h10M4.5 77.1h9M4.5 79.1h6M4.5 81.1h6M4.5 83.1h5M2.5 87.1h10M4.5 89.1h9M4.5 91.1h6M4.5 93.1h6M4.5 95.1h5M2.5 99.1h8M4.5 101.1h9M4.5 103.1h6M4.5 105.1h6M4.5 107.1h5M2.5 111.1h10M4.5 113.1h9M4.5 115.1h6M4.5 117.1h6M4.5 119.1h5M2.5 123.1h11M4.5 125.1h9M4.5 127.1h6M4.5 129.1h6M4.5 131.1h5M2.5 135.1h12M4.5 137.1h9M4.5 139.1h6M4.5 141.1h6M4.5 143.1h5M2.5 147.1h10M4.5 149.1h9M4.5 151.1h6M4.5 153.1h6M4.5 155.1h5M2.5 159.1h7M4.5 161.1h9M4.5 163.1h6M4.5 165.1h6M4.5 167.1h5M2.5 171.1h10M4.5 173.1h9M4.5 175.1h6M4.5 177.1h6M4.5 179.1h5M2.5 183.1h11M4.5 185.1h9M4.5 187.1h6M4.5 189.1h6M4.5 191.1h5M2.5 195.1h9M4.5 197.1h9M4.5 199.1h6M4.5 201.1h6M4.5 203.1h5M2.5 207.1h11M4.5 209.1h9M4.5 211.1h6M4.5 213.1h6M4.5 215.1h5M2.5 219.1h10M4.5 221.1h9M4.5 223.1h6M4.5 225.1h6M4.5 227.1h5M2.5 231.1h14M4.5 233.1h9M4.5 235.1h6M4.5 237.1h6M4.5 239.1h5M2.5 243.1h11M4.5 245.1h9M4.5 247.1h6M4.5 249.1h6M4.5 251.1h5M2.5 255.1h7M4.5 257.1h9M4.5 259.1h6M4.5 261.1h6M4.5 263.1h5M2.5 267.1h10M4.5 269.1h9M4.5 271.1h6M4.5 273.1h6M4.5 275.1h5M2.5 279.1h14M4.5 281.1h9M4.5 283.1h6M4.5 285.1h6M4.5 287.1h5M2.5 291.1h20M4.5 293.1h9M4.5 295.1h6M4.5 297.1h6M4.5 299.1h5M2.5 303.1h5M4.5 305.1h9M4.5 307.1h6M4.5 309.1h6M4.5 311.1h5M2.5 315.1h18M4.5 317.1h9M4.5 319.1h6M4.5 321.1h6M4.5 323.1h5M2.5 327.1h13M4.5 329.1h9M4.5 331.1h6M4.5 333.1h6M4.5 335.1h5M2.5 339.1h7M4.5 341.1h9M4.5 343.1h6M4.5 345.1h6M4.5 347.1h5M2.5 351.1h8M4.5 353.1h9M4.5 355.1h6M4.5 357.1h6M2.5 361.1h6M4.5 363.1h9M4.5 365.1h6" stroke="#3d6e84" stroke-width="1.300" stroke-opacity="0.85" fill="none"/><path d="M15.5 5.1h14M12.5 7.1h19M12.5 9.1h16M11.5 11.1h15M15.5 17.1h18M12.5 19.1h27M12.5 21.1h8M11.5 23.1h7M15.5 29.1h25M12.5 31.1h34M12.5 33.1h17M11.5 35.1h12M15.5 41.1h12M12.5 43.1h15M12.5 45.1h10M11.5 47.1h7M15.5 53.1h15M12.5 55.1h16M12.5 57.1h13M11.5 59.1h10M15.5 65.1h12M12.5 67.1h16M12.5 69.1h17M11.5 71.1h7M15.5 77.1h13M12.5 79.1h20M12.5 81.1h11M11.5 83.1h9M15.5 89.1h18M12.5 91.1h20M12.5 93.1h11M11.5 95.1h8M15.5 101.1h13M12.5 103.1h27M12.5 105.1h9M11.5 107.1h7M15.5 113.1h12M12.5 115.1h12M12.5 117.1h11M11.5 119.1h8M15.5 125.1h13M12.5 127.1h15M12.5 129.1h12M11.5 131.1h9M15.5 137.1h13M12.5 139.1h16M12.5 141.1h13M11.5 143.1h8M15.5 149.1h13M12.5 151.1h20M12.5 153.1h11M11.5 155.1h9M15.5 161.1h14M12.5 163.1h20M12.5 165.1h8M11.5 167.1h7M15.5 173.1h14M12.5 175.1h14M12.5 177.1h11M11.5 179.1h9M15.5 185.1h18M12.5 187.1h12M12.5 189.1h12M11.5 191.1h11M15.5 197.1h17M12.5 199.1h19M12.5 201.1h10M11.5 203.1h7M15.5 209.1h14M12.5 211.1h17M12.5 213.1h12M11.5 215.1h10M15.5 221.1h14M12.5 223.1h15M12.5 225.1h11M11.5 227.1h10M15.5 233.1h17M12.5 235.1h15M12.5 237.1h15M11.5 239.1h7M15.5 245.1h12M12.5 247.1h19M12.5 249.1h12M11.5 251.1h10M15.5 257.1h16M12.5 259.1h20M12.5 261.1h8M11.5 263.1h8M15.5 269.1h15M12.5 271.1h16M12.5 273.1h11M11.5 275.1h7M15.5 281.1h31M12.5 283.1h23M12.5 285.1h15M11.5 287.1h15M15.5 293.1h25M12.5 295.1h57M12.5 297.1h21M11.5 299.1h21M15.5 305.1h10M12.5 307.1h11M12.5 309.1h6M11.5 311.1h6M15.5 317.1h27M12.5 319.1h31M12.5 321.1h19M11.5 323.1h12M15.5 329.1h16M12.5 331.1h12M12.5 333.1h14M11.5 335.1h10M15.5 341.1h17M12.5 343.1h15M12.5 345.1h8M11.5 347.1h7M15.5 353.1h18M12.5 355.1h16M12.5 357.1h9M15.5 363.1h14M12.5 365.1h19" stroke="#865744" stroke-width="1.300" stroke-opacity="0.85" fill="none"/><path d="M0 1.1h1M17.5 3.1h3M13.5 5.1h1M10.5 7.1h1M10.5 9.1h1M9.5 11.1h1M2.5 13.1h2M9.5 15.1h3M13.5 17.1h1M10.5 19.1h1M10.5 21.1h1M9.5 23.1h1M2.5 25.1h2M18.5 27.1h3M13.5 29.1h1M10.5 31.1h1M10.5 33.1h1M9.5 35.1h1M2.5 37.1h2M11.5 39.1h3M13.5 41.1h1M10.5 43.1h1M10.5 45.1h1M9.5 47.1h1M2.5 49.1h2M14.5 51.1h3M13.5 53.1h1M10.5 55.1h1M10.5 57.1h1M9.5 59.1h1M2.5 61.1h2M18.5 63.1h3M13.5 65.1h1M10.5 67.1h1M10.5 69.1h1M9.5 71.1h1M2.5 73.1h2M12.5 75.1h3M13.5 77.1h1M10.5 79.1h1M10.5 81.1h1M9.5 83.1h1M2.5 85.1h2M12.5 87.1h3M13.5 89.1h1M10.5 91.1h1M10.5 93.1h1M9.5 95.1h1M2.5 97.1h2M10.5 99.1h3M13.5 101.1h1M10.5 103.1h1M10.5 105.1h1M9.5 107.1h1M2.5 109.1h2M12.5 111.1h3M13.5 113.1h1M10.5 115.1h1M10.5 117.1h1M9.5 119.1h1M2.5 121.1h2M13.5 123.1h3M13.5 125.1h1M10.5 127.1h1M10.5 129.1h1M9.5 131.1h1M2.5 133.1h2M14.5 135.1h3M13.5 137.1h1M10.5 139.1h1M10.5 141.1h1M9.5 143.1h1M2.5 145.1h2M12.5 147.1h3M13.5 149.1h1M10.5 151.1h1M10.5 153.1h1M9.5 155.1h1M2.5 157.1h2M9.5 159.1h3M13.5 161.1h1M10.5 163.1h1M10.5 165.1h1M9.5 167.1h1M2.5 169.1h2M12.5 171.1h3M13.5 173.1h1M10.5 175.1h1M10.5 177.1h1M9.5 179.1h1M2.5 181.1h2M13.5 183.1h3M13.5 185.1h1M10.5 187.1h1M10.5 189.1h1M9.5 191.1h1M2.5 193.1h2M11.5 195.1h3M13.5 197.1h1M10.5 199.1h1M10.5 201.1h1M9.5 203.1h1M2.5 205.1h2M13.5 207.1h3M13.5 209.1h1M10.5 211.1h1M10.5 213.1h1M9.5 215.1h1M2.5 217.1h2M12.5 219.1h3M13.5 221.1h1M10.5 223.1h1M10.5 225.1h1M9.5 227.1h1M2.5 229.1h2M16.5 231.1h3M13.5 233.1h1M10.5 235.1h1M10.5 237.1h1M9.5 239.1h1M2.5 241.1h2M13.5 243.1h3M13.5 245.1h1M10.5 247.1h1M10.5 249.1h1M9.5 251.1h1M2.5 253.1h2M9.5 255.1h3M13.5 257.1h1M10.5 259.1h1M10.5 261.1h1M9.5 263.1h1M2.5 265.1h2M12.5 267.1h3M13.5 269.1h1M10.5 271.1h1M10.5 273.1h1M9.5 275.1h1M2.5 277.1h2M16.5 279.1h3M13.5 281.1h1M10.5 283.1h1M10.5 285.1h1M9.5 287.1h1M2.5 289.1h2M22.5 291.1h3M13.5 293.1h1M10.5 295.1h1M10.5 297.1h1M9.5 299.1h1M2.5 301.1h2M7.5 303.1h3M13.5 305.1h1M10.5 307.1h1M10.5 309.1h1M9.5 311.1h1M2.5 313.1h2M20.5 315.1h3M13.5 317.1h1M10.5 319.1h1M10.5 321.1h1M9.5 323.1h1M2.5 325.1h2M15.5 327.1h3M13.5 329.1h1M10.5 331.1h1M10.5 333.1h1M9.5 335.1h1M2.5 337.1h2M9.5 339.1h3M13.5 341.1h1M10.5 343.1h1M10.5 345.1h1M9.5 347.1h1M2.5 349.1h2M10.5 351.1h3M13.5 353.1h1M10.5 355.1h1M10.5 357.1h1M2.5 359.1h2M8.5 361.1h3M13.5 363.1h1M10.5 365.1h1M2.5 367.1h1M1 369.1h1M0 371.1h1" stroke="#585858" stroke-width="1.300" stroke-opacity="0.85" fill="none"/><path d="M3 87.100h3M20.500 89.100h3M25 91.100h3M13.500 93.100h3M3.500 279.100h3M21 281.100h3M13.500 283.100h3M13.500 285.100h3M12.500 287.100h3" stroke="#eda63a" stroke-width="1.900" fill="none"/></svg>
<div style="left:1704px;top:146px;width:1px;height:437px;background:#3a3a3a;"></div>
<div style="left:1704px;top:146px;width:14px;height:1px;background:#333333;"></div>
<div style="left:1709px;top:238px;width:5.5px;height:9px;background:#9a6a1c;"></div>
<div style="left:1709px;top:437px;width:5.5px;height:11px;background:#9a6a1c;"></div>
<div style="left:1705px;top:449px;width:13px;height:2px;background:#c8c8c8;"></div>
<div style="left:1709px;top:448px;width:5.5px;height:6px;background:#bdbdbd;"></div>
<div style="left:1709px;top:458px;width:5.5px;height:6px;background:#bdbdbd;"></div>
<div style="left:1705px;top:522px;width:4.5px;height:9px;background:#51661f;"></div>
<div style="left:1586px;top:506px;width:2px;height:8px;background:#6b8a1a;"></div>
<div style="left:1151px;top:146px;width:419px;height:34px;background:#252526;box-shadow:0 2px 8px rgba(0,0,0,0.6);"></div>
<div style="left:1151px;top:146px;width:3px;height:34px;background:#3a3a3a;"></div>
<svg style="left:1159.5px;top:157.5px;" width="8" height="11" viewBox="0 0 8 11"><path d="M1.500 1l4.500 4.500L1.500 10" fill="none" stroke="#c5c5c5" stroke-width="1.100"/></svg>
<div style="left:1172px;top:150px;width:223px;height:25px;background:#3c3c3c;"></div>
<span class="t" style="left:1177px;top:153px;height:20px;line-height:20px;font-size:13px;color:#cccccc;letter-spacing:0.099px;">app</span>
<span class="t" style="left:1333px;top:153.5px;height:20px;line-height:20px;font-size:11.5px;color:#a6a6a6;letter-spacing:-1.039px;">Aa</span>
<span class="t" style="left:1354.5px;top:152.5px;height:20px;line-height:20px;font-size:11.5px;color:#a6a6a6;letter-spacing:-0.398px;">ab</span>
<svg style="left:1352px;top:164px;" width="18" height="6" viewBox="0 0 18 6"><path d="M0.600 0.500v3.900h15.800V0.500" fill="none" stroke="#a6a6a6" stroke-width="1"/></svg>
<div style="left:1377px;top:165px;width:3.5px;height:3.5px;background:#b0b0b0;"></div>
<svg style="left:1381px;top:156px;" width="9" height="9" viewBox="0 0 9 9"><path d="M4.500 0.500v8M1 2.500l7 4M8 2.500l-7 4" stroke="#b0b0b0" stroke-width="1"/></svg>
<span class="t" style="left:1400px;top:153px;height:20px;line-height:20px;font-size:12.5px;color:#cccccc;letter-spacing:-0.477px;">9 中的 9</span>
<svg style="left:1475px;top:156px;" width="12" height="14" viewBox="0 0 12 14"><path d="M6 13V1.500M1 6.500l5-5 5 5" fill="none" stroke="#c5c5c5" stroke-width="1.100"/></svg>
<svg style="left:1500px;top:156px;" width="12" height="14" viewBox="0 0 12 14"><path d="M6 1v11.500M1 7.500l5 5 5-5" fill="none" stroke="#c5c5c5" stroke-width="1.100"/></svg>
<svg style="left:1523px;top:157px;" width="14" height="12" viewBox="0 0 14 12"><path d="M0.500 1.500h13M0.500 6h13M0.500 10.500h9" stroke="#c5c5c5" stroke-width="1.100"/></svg>
<svg style="left:1550px;top:158px;" width="10" height="10" viewBox="0 0 10 10"><path d="M1 1l8 8M9 1l-8 8" stroke="#c5c5c5" stroke-width="1.100"/></svg>
<div style="left:322px;top:89px;width:97px;height:35px;background:#2d2d2d;"></div>
<div style="left:420px;top:89px;width:155px;height:35px;background:#2d2d2d;"></div>
<div style="left:576px;top:89px;width:148px;height:35px;background:#2d2d2d;"></div>
<div style="left:725px;top:89px;width:208px;height:35px;background:#2d2d2d;"></div>
<div style="left:934px;top:89px;width:142px;height:35px;background:#2d2d2d;"></div>
<div style="left:1077px;top:89px;width:225px;height:35px;background:#2d2d2d;"></div>
<div style="left:1496px;top:89px;width:122.5px;height:35px;background:#2d2d2d;"></div>
<div style="left:1303px;top:89px;width:192px;height:35px;background:#1e1e1e;"></div>
<div style="left:322px;top:89px;width:14px;height:35px;overflow:hidden"><span class="t" style="left:-4.3px;top:7.7px;height:20px;line-height:20px;font-size:13px;color:#d7ba7d;letter-spacing:-0.1px">gn</span></div>
<span class="t" style="left:339px;top:97.7px;height:20px;line-height:20px;font-size:11.5px;color:#a08f6c;letter-spacing:0.433px;">.../app</span>
<span class="t" style="left:380px;top:96.7px;height:20px;line-height:20px;font-size:11.5px;color:#d7ba7d;font-weight:700;letter-spacing:0.406px;">M</span>
<svg style="left:436px;top:100px;" width="11" height="12" viewBox="0 0 11 12"><path d="M1 1.500h9M1 4.500h6M1 7.500h9M1 10.500h6" stroke="#a0a0a0" stroke-width="1.300"/></svg>
<span class="t" style="left:451px;top:96.7px;height:20px;line-height:20px;font-size:13px;color:#a0a0a0;letter-spacing:-0.297px;">BUILD.gn</span>
<span class="t" style="left:511px;top:97.7px;height:20px;line-height:20px;font-size:11.5px;color:#777;letter-spacing:0.422px;">adb/…</span>
<span class="t" style="left:590px;top:96.7px;height:20px;line-height:20px;font-size:13px;color:#519aba;font-weight:700;letter-spacing:0.609px;">C</span>
<span class="t" style="left:608px;top:96.7px;height:20px;line-height:20px;font-size:13px;color:#f48771;letter-spacing:0.203px;">hello.c</span>
<span class="t" style="left:653px;top:97.7px;height:20px;line-height:20px;font-size:11.5px;color:#b0695c;letter-spacing:-0.006px;">…/src</span>
<span class="t" style="left:689px;top:97.7px;height:20px;line-height:20px;font-size:11.5px;color:#f48771;font-weight:700;letter-spacing:-0.406px;">2</span>
<span class="t" style="left:739px;top:96.7px;height:20px;line-height:20px;font-size:13px;color:#519aba;font-weight:700;letter-spacing:0.609px;">C</span>
<span class="t" style="left:756px;top:96.7px;height:20px;line-height:20px;font-size:13px;color:#a0a0a0;letter-spacing:0.203px;">hello.c</span>
<span class="t" style="left:801px;top:97.7px;height:20px;line-height:20px;font-size:11.5px;color:#777;letter-spacing:0.344px;">applications/app/…</span>
<svg style="left:944px;top:98px;" width="15" height="15" viewBox="0 0 15 15"><path d="M7.500 2 1.500 13h12z" fill="none" stroke="#3b8eea" stroke-width="2.200" stroke-linejoin="round"/><path d="M7.500 7.500l-2.500 4" stroke="#3b8eea" stroke-width="1.800"/></svg>
<span class="t" style="left:966px;top:96.7px;height:20px;line-height:20px;font-size:13px;color:#a0a0a0;letter-spacing:-0.165px;">DevEco Home</span>
<svg style="left:1094px;top:100px;" width="11" height="12" viewBox="0 0 11 12"><path d="M1 1.500h9M1 4.500h6M1 7.500h9M1 10.500h6" stroke="#a0a0a0" stroke-width="1.300"/></svg>
<span class="t" style="left:1109px;top:96.7px;height:20px;line-height:20px;font-size:13px;color:#a0a0a0;letter-spacing:-0.297px;">BUILD.gn</span>
<span class="t" style="left:1170px;top:97.7px;height:20px;line-height:20px;font-size:11.5px;color:#777;letter-spacing:0.344px;">applications/app/…</span>
<span class="t" style="left:1318px;top:96.7px;height:20px;line-height:20px;font-size:12px;color:#cbcb41;font-weight:700;letter-spacing:0.828px;">{}</span>
<span class="t" style="left:1335px;top:96.7px;height:20px;line-height:20px;font-size:13px;color:#ffffff;letter-spacing:0.071px;">subsystem_config.json</span>
<svg style="left:1477px;top:101px;" width="10" height="10" viewBox="0 0 10 10"><path d="M1 1l8 8M9 1l-8 8" stroke="#e0e0e0" stroke-width="1.200"/></svg>
<svg style="left:1514px;top:100px;" width="11" height="12" viewBox="0 0 11 12"><path d="M1 1.500h9M1 4.500h6M1 7.500h9M1 10.500h6" stroke="#a0a0a0" stroke-width="1.300"/></svg>
<span class="t" style="left:1530px;top:96.7px;height:20px;line-height:20px;font-size:13px;color:#a0a0a0;letter-spacing:-0.080px;font-style:italic;">version.gni</span>
<svg style="left:1635px;top:99.3px;" width="15" height="16" viewBox="0 0 15 16"><circle cx="7.500" cy="4.800" r="3.300" fill="none" stroke="#c5c5c5" stroke-width="1.200"/><path d="M1.500 15c0-4 2.500-6.300 6-6.300s6 2.300 6 6.300" fill="none" stroke="#c5c5c5" stroke-width="1.200"/></svg>
<svg style="left:1662px;top:100px;" width="14" height="14" viewBox="0 0 14 14"><rect x="1.300" y="0.800" width="12" height="11.400" fill="none" stroke="#c5c5c5" stroke-width="1.200"/><path d="M7.300 0.800v11.400" stroke="#c5c5c5" stroke-width="1.200"/></svg>
<div style="left:1689px;top:105.5px;width:2px;height:2px;background:#c5c5c5;border-radius:50%;"></div>
<div style="left:1694px;top:105.5px;width:2px;height:2px;background:#c5c5c5;border-radius:50%;"></div>
<div style="left:1699px;top:105.5px;width:2px;height:2px;background:#c5c5c5;border-radius:50%;"></div>
<div style="left:322px;top:89px;width:6px;height:57px;background:linear-gradient(90deg,rgba(0,0,0,0.35),rgba(0,0,0,0));"></div>
<span class="t" style="left:338px;top:125.8px;height:20px;line-height:20px;font-size:13px;color:#a0a0a0;letter-spacing:0.132px;">OpenHarmony</span>
<svg style="left:428px;top:130px;" width="7" height="10" viewBox="0 0 7 10"><path d="M1.200 1l4 4-4 4" fill="none" stroke="#a0a0a0" stroke-width="1.100"/></svg>
<span class="t" style="left:440px;top:125.8px;height:20px;line-height:20px;font-size:13px;color:#a0a0a0;letter-spacing:0.506px;">build</span>
<svg style="left:474px;top:130px;" width="7" height="10" viewBox="0 0 7 10"><path d="M1.200 1l4 4-4 4" fill="none" stroke="#a0a0a0" stroke-width="1.100"/></svg>
<span class="t" style="left:489px;top:125.8px;height:20px;line-height:20px;font-size:12px;color:#cbcb41;font-weight:700;letter-spacing:0.828px;">{}</span>
<span class="t" style="left:507px;top:125.8px;height:20px;line-height:20px;font-size:13px;color:#a0a0a0;letter-spacing:0.118px;">subsystem_config.json</span>
<svg style="left:646px;top:130px;" width="7" height="10" viewBox="0 0 7 10"><path d="M1.200 1l4 4-4 4" fill="none" stroke="#a0a0a0" stroke-width="1.100"/></svg>
<span class="t" style="left:658px;top:125.8px;height:20px;line-height:20px;font-size:12px;color:#a0a0a0;letter-spacing:1.992px;">{}</span>
<span class="t" style="left:676px;top:125.8px;height:20px;line-height:20px;font-size:13px;color:#a0a0a0;letter-spacing:0.054px;">wpa_supplicant-2.9</span>
<div style="left:322px;top:583px;width:1396px;height:283px;background:#1e1e1e;"></div>
<div style="left:322px;top:583px;width:1396px;height:1px;background:#434343;"></div>
<span class="t" style="left:344px;top:592px;height:20px;line-height:20px;font-size:11px;color:#969696;letter-spacing:-0.643px;">PROBLEMS</span>
<div style="left:411px;top:592px;width:18px;height:18px;background:#4d4d4d;border-radius:50%;"></div>
<span class="t" style="left:417px;top:594px;height:16px;line-height:16px;font-size:11px;color:#ffffff;letter-spacing:-0.125px;">2</span>
<span class="t" style="left:451px;top:592px;height:20px;line-height:20px;font-size:11px;color:#969696;letter-spacing:0.000px;">输出</span>
<span class="t" style="left:497px;top:592px;height:20px;line-height:20px;font-size:11px;color:#969696;letter-spacing:-0.200px;">调试控制台</span>
<span class="t" style="left:576px;top:592px;height:20px;line-height:20px;font-size:11px;color:#e7e7e7;letter-spacing:0.000px;">终端</span>
<div style="left:574px;top:616.5px;width:26px;height:1px;background:#e7e7e7;"></div>
<svg style="left:1630.5px;top:594.5px;" width="14" height="14" viewBox="0 0 14 14"><path d="M7 0.500v13M0.500 7h13" stroke="#c5c5c5" stroke-width="1.050"/></svg>
<svg style="left:1649.5px;top:599px;" width="9" height="7" viewBox="0 0 9 7"><path d="M0.800 1l3.700 3.700L8.200 1" fill="none" stroke="#c5c5c5" stroke-width="1"/></svg>
<svg style="left:1671px;top:597px;" width="12" height="8" viewBox="0 0 12 8"><path d="M1 6.300l5-5 5 5" fill="none" stroke="#c5c5c5" stroke-width="1.050"/></svg>
<svg style="left:1694px;top:596px;" width="10" height="10" viewBox="0 0 10 10"><path d="M1 1l8 8M9 1l-8 8" stroke="#c5c5c5" stroke-width="1.100"/></svg>
<span class="t m" style="left:342px;top:625.6px;height:16px;line-height:16px;font-size:14.6px;color:#cccccc;letter-spacing:-0.762px;"><span style="color:#11a8cd">user_3_hi3861      </span>buildprog  IGNORED</span>
<span class="t m" style="left:342px;top:641.6px;height:16px;line-height:16px;font-size:14.6px;color:#cccccc;letter-spacing:-0.762px;"><span style="color:#11a8cd">user_4_hi3861      </span>clean      IGNORED</span>
<span class="t m" style="left:342px;top:657.6px;height:16px;line-height:16px;font-size:14.6px;color:#cccccc;letter-spacing:-0.762px;"><span style="color:#11a8cd">user_4_hi3861      </span>buildprog  IGNORED</span>
<span class="t m" style="left:342px;top:673.6px;height:16px;line-height:16px;font-size:14.6px;color:#cccccc;letter-spacing:-0.762px;"><span style="color:#11a8cd">user_1_hh_scdy200  </span>clean      IGNORED</span>
<span class="t m" style="left:342px;top:689.6px;height:16px;line-height:16px;font-size:14.6px;color:#cccccc;letter-spacing:-0.762px;"><span style="color:#11a8cd">user_1_hh_scdy200  </span>buildprog  IGNORED</span>
<span class="t m" style="left:342px;top:705.6px;height:16px;line-height:16px;font-size:14.6px;color:#cccccc;letter-spacing:-0.762px;"><span style="color:#11a8cd">user_2_hh_scdy200  </span>clean      IGNORED</span>
<span class="t m" style="left:342px;top:721.6px;height:16px;line-height:16px;font-size:14.6px;color:#cccccc;letter-spacing:-0.762px;"><span style="color:#11a8cd">user_2_hh_scdy200  </span>buildprog  IGNORED</span>
<span class="t m" style="left:342px;top:737.6px;height:16px;line-height:16px;font-size:14.6px;color:#cccccc;letter-spacing:-0.762px;"><span style="color:#11a8cd">user_3_hh_scdy200  </span>clean      IGNORED</span>
<span class="t m" style="left:342px;top:753.6px;height:16px;line-height:16px;font-size:14.6px;color:#cccccc;letter-spacing:-0.762px;"><span style="color:#11a8cd">user_3_hh_scdy200  </span>buildprog  IGNORED</span>
<span class="t m" style="left:342px;top:769.6px;height:16px;line-height:16px;font-size:14.6px;color:#cccccc;letter-spacing:-0.762px;"><span style="color:#11a8cd">user_4_hh_scdy200  </span>clean      IGNORED</span>
<span class="t m" style="left:342px;top:785.6px;height:16px;line-height:16px;font-size:14.6px;color:#cccccc;letter-spacing:-0.762px;"><span style="color:#11a8cd">user_4_hh_scdy200  </span>buildprog  IGNORED</span>
<span class="t m" style="left:342px;top:801.6px;height:16px;line-height:16px;font-size:14.6px;color:#12b073;letter-spacing:-0.762px;">============================================================== 2 succeeded in 00:00:11.317 ==============================================================</span>
<span class="t" style="left:342px;top:832.3px;height:16px;line-height:16px;font-size:13.5px;color:#e5e5e5;font-weight:700;letter-spacing:2.500px;">终端将被任务重用，按任意键关闭。</span>
<div style="left:342px;top:849px;width:8px;height:14px;background:transparent;border:1px solid #cccccc;box-sizing:border-box;"></div>
<div style="left:1598px;top:618px;width:1px;height:248px;background:#3a3a3a;"></div>
<div style="left:1599px;top:640px;width:119px;height:22px;background:#37373d;"></div>
<svg style="left:1609px;top:619px;" width="16" height="18" viewBox="0 0 16 18"><path d="M8 1.300 14.500 4.800v8.600L8 16.900 1.500 13.400V4.800z" fill="none" stroke="#c5c5c5" stroke-width="1"/><path d="M8.300 9.200 14.500 5.300v8.100L8.300 16.700z" fill="#c5c5c5"/><path d="M10 13.200c.9.400 1.900-.2 1.700-1.100-.2-.8-1.600-.5-1.700-1.400-.1-.8.900-1.300 1.700-.9M10.900 9.200v5" fill="none" stroke="#1e1e1e" stroke-width="0.800"/></svg>
<span class="t" style="left:1628px;top:619.7px;height:20px;line-height:20px;font-size:13px;color:#cccccc;letter-spacing:-0.051px;">bash</span>
<svg style="left:1609px;top:643px;" width="16" height="16" viewBox="0 0 16 16"><g fill="none" stroke-linecap="round"><path d="M2.200 2.600 5 5.400M6 6.400l7.600 7.600" stroke="#c5c5c5" stroke-width="2.600"/><path d="M2.500 13.600 11 5.100" stroke="#c5c5c5" stroke-width="2.600"/><circle cx="12.200" cy="3.900" r="2.600" stroke="#c5c5c5" stroke-width="1.300"/><path d="M12.200 3.900l2.400-2.400" stroke="#37373d" stroke-width="2.200"/><path d="M3 13.100 10.800 5.300M6.600 7l6.600 6.600M2.600 3 4.600 5" stroke="#37373d" stroke-width="0.800"/></g></svg>
<span class="t" style="left:1628px;top:641.7px;height:20px;line-height:20px;font-size:13px;color:#cccccc;letter-spacing:0.259px;">Worksp...</span>
<svg style="left:1693px;top:646px;" width="14" height="12" viewBox="0 0 14 12"><path d="M1 6.500l3.700 4L13.200 1" fill="none" stroke="#c5c5c5" stroke-width="1"/></svg>
</div></body></html>
